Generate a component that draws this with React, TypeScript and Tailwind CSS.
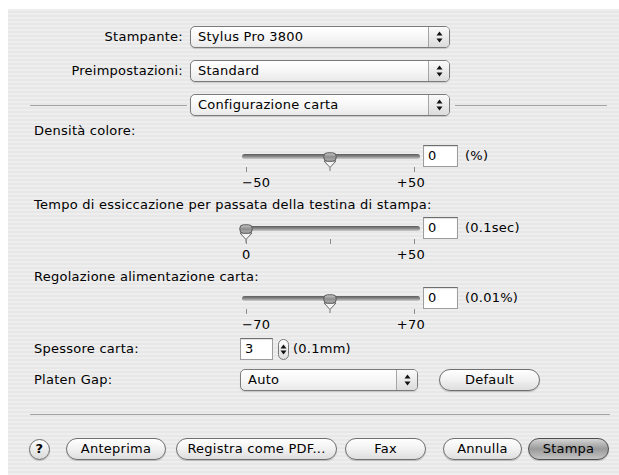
import type { ReactNode } from 'react';

const font = "font-['DejaVu_Sans',_'Liberation_Sans',_sans-serif]";

function Arrows({ size = 'md' }: { size?: 'md' | 'sm' }) {
  const h = size === 'md' ? 12 : 11;
  return (
    <svg width="7" height={h} viewBox={`0 0 7 ${h}`}>
      <path d="M3.5 0.5 L6.5 4.5 L0.5 4.5 Z" fill="#111" />
      <path d={`M0.5 ${h - 4.5} L6.5 ${h - 4.5} L3.5 ${h - 0.5} Z`} fill="#111" />
    </svg>
  );
}

function Popup({ label, className }: { label: string; className: string }) {
  return (
    <div
      className={`${className} flex h-[22px] items-stretch rounded-[5px] border border-[#7b7b7b] bg-gradient-to-b from-[#ffffff] via-[#f7f7f7] to-[#e9e9e9] shadow-[0_1px_1px_rgba(0,0,0,0.15)]`}
    >
      <div className="flex-1 truncate pl-[7px] leading-[20px]">{label}</div>
      <div className="flex w-[21px] items-center justify-center rounded-r-[4px] border-l border-[#a5a5a5] bg-gradient-to-b from-[#fafafa] to-[#dcdcdc]">
        <Arrows />
      </div>
    </div>
  );
}

function Field({ value, className = 'w-[35px]' }: { value: string; className?: string }) {
  return (
    <div
      className={`${className} h-[22px] border border-[#9d9d9d] border-t-[#6e6e6e] bg-white pl-[4px] leading-[20px] shadow-[inset_0_1px_1px_rgba(0,0,0,0.12)]`}
    >
      {value}
    </div>
  );
}

function Pill({ children, className, dark }: { children: ReactNode; className: string; dark?: boolean }) {
  return (
    <div
      className={`${className} flex h-[22px] items-center justify-center rounded-full border ${
        dark
          ? 'border-[#4e4e4e] bg-gradient-to-b from-[#d4d4d4] via-[#9a9a9a] to-[#c4c4c4]'
          : 'border-[#6f6f6f] bg-gradient-to-b from-[#ffffff] via-[#f1f1f1] to-[#dedede]'
      } shadow-[0_1px_1px_rgba(0,0,0,0.2)]`}
    >
      {children}
    </div>
  );
}

function Thumb() {
  return (
    <svg width="14" height="19" viewBox="0 0 14 19">
      <defs>
        <linearGradient id="tg" x1="0" y1="0" x2="0" y2="1">
          <stop offset="0" stopColor="#c9c9c9" />
          <stop offset="0.5" stopColor="#8d8d8d" />
          <stop offset="1" stopColor="#b4b4b4" />
        </linearGradient>
      </defs>
      <path d="M1 9 L7 15.5 L13 9 Z" fill="#f4f4f4" stroke="#6a6a6a" strokeWidth="1" strokeLinejoin="round" />
      <rect x="0.8" y="0.8" width="12.4" height="8.4" rx="3.5" fill="url(#tg)" stroke="#5a5a5a" strokeWidth="1" />
      <line x1="7" y1="15.5" x2="7" y2="19" stroke="#777" strokeWidth="1" />
    </svg>
  );
}

interface SliderProps {
  value: number;
  ticks: number[];
  min: string;
  max: string;
  unit: string;
}

function Slider({ value, ticks, min, max, unit }: SliderProps) {
  return (
    <div className="ml-[234px] flex">
      <div className="w-[178px]">
        <div className="relative mt-[9px] h-[5px] rounded-full bg-gradient-to-b from-[#5c5c5c] via-[#8a8a8a] to-[#cfcfcf]">
          <div className="absolute top-[-2px]" style={{ left: 4 + value * 168 - 7 }}>
            <Thumb />
          </div>
        </div>
        <div className="relative mt-[8px] h-[5px]">
          {ticks.map(t => (
            <div key={t} className="absolute top-0 h-[5px] w-px bg-[#8c8c8c]" style={{ left: 4 + t * 168 }} />
          ))}
        </div>
        <div className="mt-[3px] flex w-[183px] justify-between leading-[16px]">
          <span>{min}</span>
          <span>{max}</span>
        </div>
      </div>
      <Field value="0" className="ml-[3px] w-[35px]" />
      <div className="ml-[7px] leading-[22px]">{unit}</div>
    </div>
  );
}

export default function App() {
  return (
    <div className={`h-[475px] w-[619px] bg-white pl-[8px] pt-[9px] text-[13px] tracking-[0.25px] text-black ${font}`}>
      <div className="h-full w-full bg-[repeating-linear-gradient(180deg,#eeeeee_0px,#eeeeee_2px,#e7e7e7_2px,#e7e7e7_4px)] pt-[17px]">
        <div className="flex items-center">
          <div className="w-[175px] text-right">Stampante:</div>
          <Popup label="Stylus Pro 3800" className="ml-[7px] w-[260px]" />
        </div>
        <div className="mt-[12px] flex items-center">
          <div className="w-[175px] text-right">Preimpostazioni:</div>
          <Popup label="Standard" className="ml-[7px] w-[260px]" />
        </div>
        <div className="mt-[12px] flex items-center pl-[22px]">
          <div className="h-px w-[157px] bg-[#a3a3a3]" />
          <Popup label="Configurazione carta" className="ml-[3px] w-[260px]" />
          <div className="ml-[5px] h-px w-[152px] bg-[#a3a3a3]" />
        </div>

        <div className="mt-[7px] pl-[26px] leading-[16px]">Densità colore:</div>
        <div className="mt-[6px]">
          <Slider value={0.5} ticks={[0, 1]} min="−50" max="+50" unit="(%)" />
        </div>

        <div className="mt-[6px] pl-[26px] leading-[16px]">Tempo di essiccazione per passata della testina di stampa:</div>
        <div className="mt-[4px]">
          <Slider value={0} ticks={[0, 0.5, 1]} min="0" max="+50" unit="(0.1sec)" />
        </div>

        <div className="mt-[6px] pl-[26px] leading-[16px]">Regolazione alimentazione carta:</div>
        <div className="mt-[2px]">
          <Slider value={0.5} ticks={[0, 1]} min="−70" max="+70" unit="(0.01%)" />
        </div>

        <div className="mt-[5px] flex items-center pl-[26px]">
          <div className="w-[206px]">Spessore carta:</div>
          <Field value="3" className="w-[33px]" />
          <div className="ml-[5px] flex h-[21px] w-[11px] items-center justify-center rounded-full border border-[#7a7a7a] bg-gradient-to-b from-[#ffffff] to-[#dedede]">
            <Arrows size="sm" />
          </div>
          <div className="ml-[4px]">(0.1mm)</div>
        </div>

        <div className="mt-[9px] flex items-center pl-[26px]">
          <div className="w-[206px]">Platen Gap:</div>
          <Popup label="Auto" className="w-[178px]" />
          <Pill className="ml-[21px] w-[101px]">Default</Pill>
        </div>

        <div className="ml-[22px] mt-[23px] h-px w-[580px] bg-[#a3a3a3]" />

        <div className="mt-[23px] flex items-center pl-[21px]">
          <div className="flex h-[21px] w-[21px] items-center justify-center rounded-full border border-[#6f6f6f] bg-gradient-to-b from-[#ffffff] to-[#d9d9d9] text-[13px] font-bold shadow-[0_1px_1px_rgba(0,0,0,0.2)]">
            ?
          </div>
          <Pill className="ml-[16px] w-[100px]">Anteprima</Pill>
          <Pill className="ml-[10px] w-[161px]">Registra come PDF...</Pill>
          <Pill className="ml-[8px] w-[81px]">Fax</Pill>
          <Pill className="ml-[17px] w-[79px]">Annulla</Pill>
          <Pill className="ml-[6px] w-[81px]" dark>
            Stampa
          </Pill>
        </div>
      </div>
    </div>
  );
}
